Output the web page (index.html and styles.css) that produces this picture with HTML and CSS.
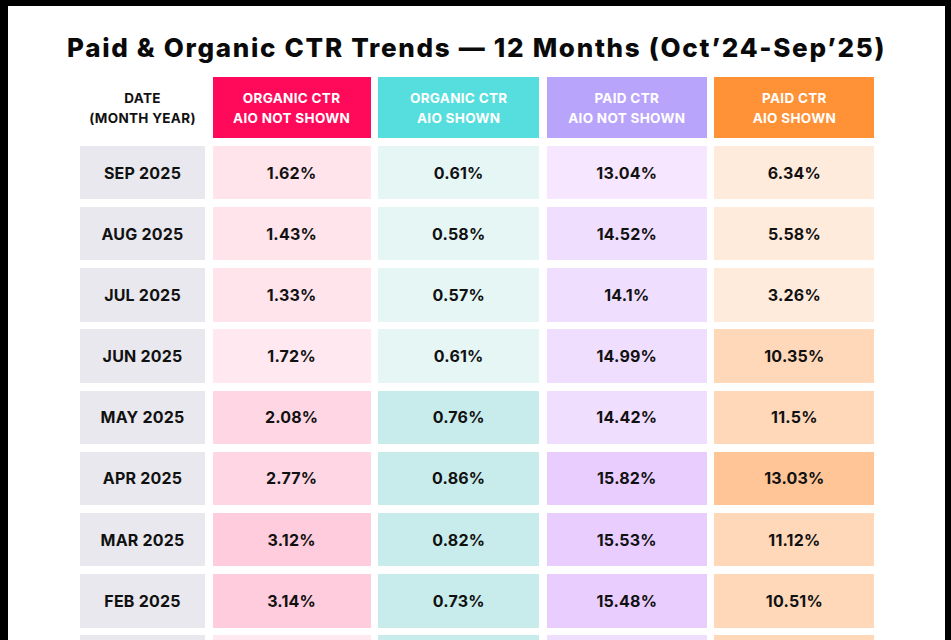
FILE: index.html
```html
<!DOCTYPE html>
<html lang="en">
<head>
<meta charset="utf-8">
<title>Paid &amp; Organic CTR Trends</title>
<link rel="stylesheet" href="styles.css">
</head>
<body>
<div class="card">
  <h1 class="title">Paid &amp; Organic CTR Trends — 12 Months (Oct’24-Sep’25)</h1>
  <div class="table">
    <div class="hd hd-date">DATE<br>(MONTH YEAR)</div>
    <div class="hd hd-pink">ORGANIC CTR<br>AIO NOT SHOWN</div>
    <div class="hd hd-teal">ORGANIC CTR<br>AIO SHOWN</div>
    <div class="hd hd-purple">PAID CTR<br>AIO NOT SHOWN</div>
    <div class="hd hd-orange">PAID CTR<br>AIO SHOWN</div>

    <div class="c date">SEP 2025</div>
    <div class="c p1">1.62%</div>
    <div class="c t1">0.61%</div>
    <div class="c v1">13.04%</div>
    <div class="c o1">6.34%</div>

    <div class="c date">AUG 2025</div>
    <div class="c p1">1.43%</div>
    <div class="c t1">0.58%</div>
    <div class="c v2">14.52%</div>
    <div class="c o1">5.58%</div>

    <div class="c date">JUL 2025</div>
    <div class="c p1">1.33%</div>
    <div class="c t1">0.57%</div>
    <div class="c v2">14.1%</div>
    <div class="c o1">3.26%</div>

    <div class="c date">JUN 2025</div>
    <div class="c p0">1.72%</div>
    <div class="c t1">0.61%</div>
    <div class="c v2">14.99%</div>
    <div class="c o2">10.35%</div>

    <div class="c date">MAY 2025</div>
    <div class="c p2">2.08%</div>
    <div class="c t2">0.76%</div>
    <div class="c v2">14.42%</div>
    <div class="c o2">11.5%</div>

    <div class="c date">APR 2025</div>
    <div class="c p2">2.77%</div>
    <div class="c t2">0.86%</div>
    <div class="c v3">15.82%</div>
    <div class="c o3">13.03%</div>

    <div class="c date">MAR 2025</div>
    <div class="c p3">3.12%</div>
    <div class="c t2">0.82%</div>
    <div class="c v3">15.53%</div>
    <div class="c o2">11.12%</div>

    <div class="c date">FEB 2025</div>
    <div class="c p3">3.14%</div>
    <div class="c t2">0.73%</div>
    <div class="c v3">15.48%</div>
    <div class="c o2">10.51%</div>

    <div class="c date"></div>
    <div class="c p0"></div>
    <div class="c t2"></div>
    <div class="c v2"></div>
    <div class="c o2"></div>
  </div>
</div>
</body>
</html>
```

FILE: styles.css
```css
html, body {
  margin: 0;
  padding: 0;
  background: #000;
  height: 100%;
  overflow: hidden;
}

.card {
  margin: 6px 6px 0 8px;
  background: #fff;
  min-height: 700px;
  padding-top: 26px;
  font-family: Inter, "Liberation Sans", sans-serif;
  color: #111;
}

.title {
  margin: 0 0 13px;
  text-align: center;
  font-size: 26px;
  line-height: 32px;
  font-weight: 800;
  letter-spacing: 1.7px;
  color: #0a0a0a;
}

.table {
  width: 794px;
  margin: 0 auto 0 72px;
  display: grid;
  grid-template-columns: 125px 158px 161px 160px 160px;
  grid-template-rows: 61px;
  grid-auto-rows: 53.3px;
  column-gap: 7.6px;
  row-gap: 7.9px;
}

.hd {
  display: flex;
  align-items: center;
  justify-content: center;
  text-align: center;
  font-size: 13.5px;
  line-height: 20px;
  font-weight: 700;
  letter-spacing: 0.3px;
  color: #fff;
}

.hd-date { color: #111; background: #fff; }
.hd-pink { background: #ff0a5a; }
.hd-teal { background: #55dedd; }
.hd-purple { background: #b9a4fc; }
.hd-orange { background: #ff9136; }

.c {
  display: flex;
  align-items: center;
  justify-content: center;
  font-size: 16px;
  font-weight: 700;
  letter-spacing: 0.2px;
  color: #111;
}

.date { background: #e9e8ee; }

.p0 { background: #ffe8ef; }
.p1 { background: #ffe4ec; }
.p2 { background: #ffd6e3; }
.p3 { background: #ffccdd; }

.t1 { background: #e5f6f5; }
.t2 { background: #c8eceb; }

.v1 { background: #f6e6ff; }
.v2 { background: #f0deff; }
.v3 { background: #eacdff; }

.o1 { background: #ffebdc; }
.o2 { background: #ffd8ba; }
.o3 { background: #ffc597; }
```
